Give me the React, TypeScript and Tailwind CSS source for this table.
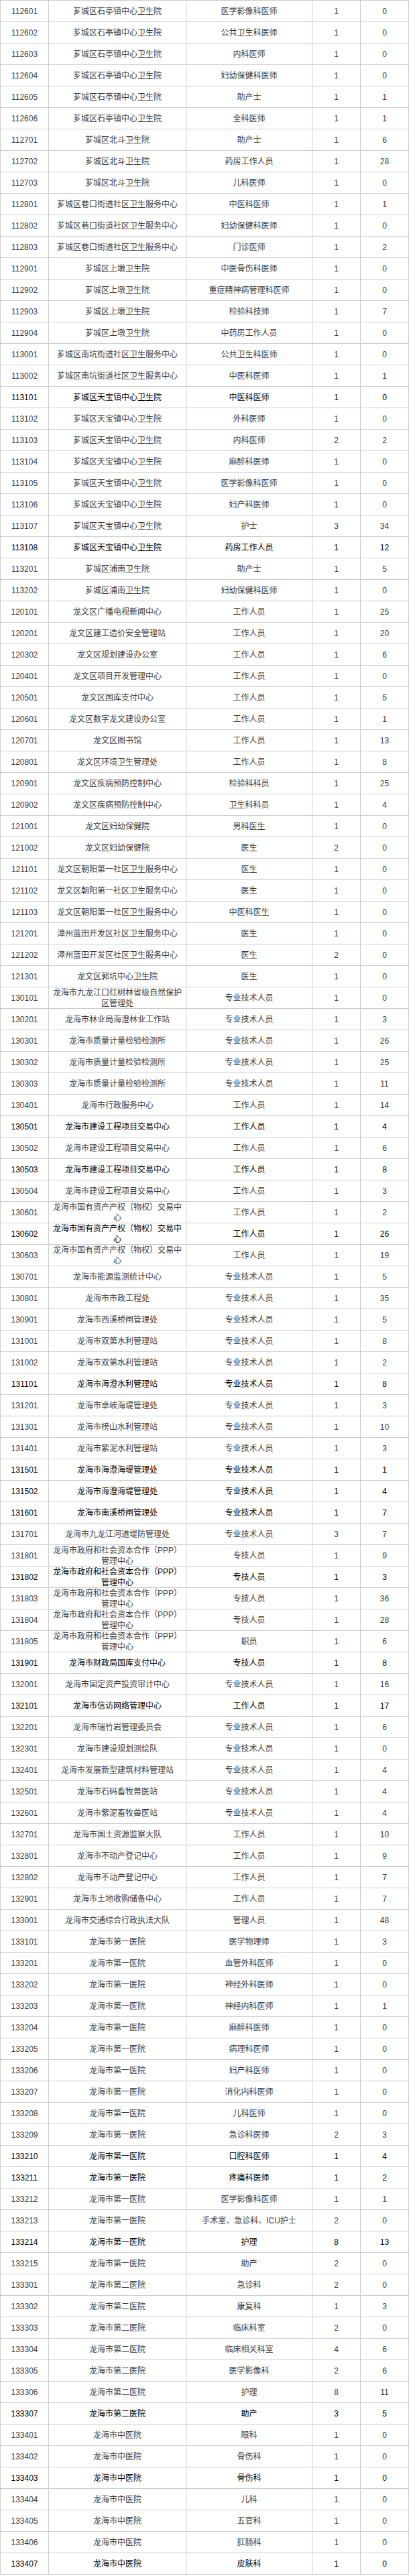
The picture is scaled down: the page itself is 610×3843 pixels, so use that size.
const RAW = `
112601|芗城区石亭镇中心卫生院|医学影像科医师|1|0
112602|芗城区石亭镇中心卫生院|公共卫生科医师|1|0
112603|芗城区石亭镇中心卫生院|内科医师|1|0
112604|芗城区石亭镇中心卫生院|妇幼保健科医师|1|0
112605|芗城区石亭镇中心卫生院|助产士|1|1
112606|芗城区石亭镇中心卫生院|全科医师|1|1
112701|芗城区北斗卫生院|助产士|1|6
112702|芗城区北斗卫生院|药房工作人员|1|28
112703|芗城区北斗卫生院|儿科医师|1|0
112801|芗城区巷口街道社区卫生服务中心|中医科医师|1|1
112802|芗城区巷口街道社区卫生服务中心|妇幼保健科医师|1|0
112803|芗城区巷口街道社区卫生服务中心|门诊医师|1|2
112901|芗城区上墩卫生院|中医骨伤科医师|1|0
112902|芗城区上墩卫生院|重症精神病管理科医师|1|0
112903|芗城区上墩卫生院|检验科技师|1|7
112904|芗城区上墩卫生院|中药房工作人员|1|0
113001|芗城区南坑街道社区卫生服务中心|公共卫生科医师|1|0
113002|芗城区南坑街道社区卫生服务中心|中医科医师|1|1
113101|芗城区天宝镇中心卫生院|中医科医师|1|0|d
113102|芗城区天宝镇中心卫生院|外科医师|1|0
113103|芗城区天宝镇中心卫生院|内科医师|2|2
113104|芗城区天宝镇中心卫生院|麻醉科医师|1|0
113105|芗城区天宝镇中心卫生院|医学影像科医师|1|0
113106|芗城区天宝镇中心卫生院|妇产科医师|1|0
113107|芗城区天宝镇中心卫生院|护士|3|34
113108|芗城区天宝镇中心卫生院|药房工作人员|1|12|d
113201|芗城区浦南卫生院|助产士|1|5
113202|芗城区浦南卫生院|妇幼保健科医师|1|0
120101|龙文区广播电视新闻中心|工作人员|1|25
120201|龙文区建工造价安全管理站|工作人员|1|20
120302|龙文区规划建设办公室|工作人员|1|6
120401|龙文区项目开发管理中心|工作人员|1|0
120501|龙文区国库支付中心|工作人员|1|5
120601|龙文区数字龙文建设办公室|工作人员|1|1
120701|龙文区图书馆|工作人员|1|13
120801|龙文区环境卫生管理处|工作人员|1|8
120901|龙文区疾病预防控制中心|检验科科员|1|25
120902|龙文区疾病预防控制中心|卫生科科员|1|4
121001|龙文区妇幼保健院|男科医生|1|0
121002|龙文区妇幼保健院|医生|2|0
121101|龙文区朝阳第一社区卫生服务中心|医生|1|0
121102|龙文区朝阳第一社区卫生服务中心|医生|1|0
121103|龙文区朝阳第一社区卫生服务中心|中医科医生|1|0
121201|漳州蓝田开发区社区卫生服务中心|医生|1|0
121202|漳州蓝田开发区社区卫生服务中心|医生|2|0
121301|龙文区郭坑中心卫生院|医生|1|0
130101|龙海市九龙江口红树林省级自然保护区管理处|专业技术人员|1|0
130201|龙海市林业局海澄林业工作站|专业技术人员|1|3
130301|龙海市质量计量检验检测所|专业技术人员|1|26
130302|龙海市质量计量检验检测所|专业技术人员|1|25
130303|龙海市质量计量检验检测所|专业技术人员|1|11
130401|龙海市行政服务中心|工作人员|1|14
130501|龙海市建设工程项目交易中心|工作人员|1|4|d
130502|龙海市建设工程项目交易中心|工作人员|1|6
130503|龙海市建设工程项目交易中心|工作人员|1|8|d
130504|龙海市建设工程项目交易中心|工作人员|1|3
130601|龙海市国有资产产权（物权）交易中心|工作人员|1|2
130602|龙海市国有资产产权（物权）交易中心|工作人员|1|26|d
130603|龙海市国有资产产权（物权）交易中心|工作人员|1|19
130701|龙海市能源监测统计中心|专业技术人员|1|5
130801|龙海市市政工程处|专业技术人员|1|35
130901|龙海市西溪桥闸管理处|专业技术人员|1|5
131001|龙海市双第水利管理站|专业技术人员|1|8
131002|龙海市双第水利管理站|专业技术人员|1|2
131101|龙海市海澄水利管理站|专业技术人员|1|8|d
131201|龙海市卓岐海堤管理处|专业技术人员|1|3
131301|龙海市榜山水利管理站|专业技术人员|1|10
131401|龙海市紫泥水利管理站|专业技术人员|1|3
131501|龙海市海澄海堤管理处|专业技术人员|1|1|d
131502|龙海市海澄海堤管理处|专业技术人员|1|4|d
131601|龙海市南溪桥闸管理处|专业技术人员|1|7|d
131701|龙海市九龙江河道堤防管理处|专业技术人员|3|7
131801|龙海市政府和社会资本合作（PPP）管理中心|专技人员|1|9
131802|龙海市政府和社会资本合作（PPP）管理中心|专技人员|1|3|d
131803|龙海市政府和社会资本合作（PPP）管理中心|专技人员|1|36
131804|龙海市政府和社会资本合作（PPP）管理中心|专技人员|1|28
131805|龙海市政府和社会资本合作（PPP）管理中心|职员|1|6
131901|龙海市财政局国库支付中心|专技人员|1|8|d
132001|龙海市固定资产投资审计中心|专业技术人员|1|16
132101|龙海市信访网络管理中心|工作人员|1|17|d
132201|龙海市瑞竹岩管理委员会|专业技术人员|1|6
132301|龙海市建设规划测绘队|专业技术人员|1|0
132401|龙海市发展新型建筑材料管理站|专业技术人员|1|4
132501|龙海市石码畜牧兽医站|专业技术人员|1|4
132601|龙海市紫泥畜牧兽医站|专业技术人员|1|4
132701|龙海市国土资源监察大队|工作人员|1|10
132801|龙海市不动产登记中心|工作人员|1|9
132802|龙海市不动产登记中心|工作人员|1|7
132901|龙海市土地收购储备中心|工作人员|1|7
133001|龙海市交通综合行政执法大队|管理人员|1|48
133101|龙海市第一医院|医学物理师|1|3
133201|龙海市第一医院|血管外科医师|1|0
133202|龙海市第一医院|神经外科医师|1|0
133203|龙海市第一医院|神经内科医师|1|1
133204|龙海市第一医院|麻醉科医师|1|0
133205|龙海市第一医院|病理科医师|1|0
133206|龙海市第一医院|妇产科医师|1|0
133207|龙海市第一医院|消化内科医师|1|0
133208|龙海市第一医院|儿科医师|1|0
133209|龙海市第一医院|急诊科医师|2|3
133210|龙海市第一医院|口腔科医师|1|4|d
133211|龙海市第一医院|疼痛科医师|1|2|d
133212|龙海市第一医院|医学影像科医师|1|1
133213|龙海市第一医院|手术室、急诊科、ICU护士|2|0
133214|龙海市第一医院|护理|8|13|d
133215|龙海市第一医院|助产|2|0
133301|龙海市第二医院|急诊科|2|0
133302|龙海市第二医院|康复科|1|3
133303|龙海市第二医院|临床科室|2|0
133304|龙海市第二医院|临床相关科室|4|6
133305|龙海市第二医院|医学影像科|2|6
133306|龙海市第二医院|护理|8|11
133307|龙海市第二医院|助产|3|5|d
133401|龙海市中医院|眼科|1|0
133402|龙海市中医院|骨伤科|1|0
133403|龙海市中医院|骨伤科|1|0|d
133404|龙海市中医院|儿科|1|0
133405|龙海市中医院|五官科|1|0
133406|龙海市中医院|肛肠科|1|0
133407|龙海市中医院|皮肤科|1|0|d
`

type Row = { id: string; unit: string; post: string; plan: string; count: string; dark: boolean }

const rows: Row[] = RAW.trim()
  .split('\n')
  .map((line) => {
    const [id, unit, post, plan, count, flag] = line.split('|')
    return { id, unit, post, plan, count, dark: flag === 'd' }
  })

const cell = 'flex items-center justify-center text-center border-r border-[#cccccc] px-1 leading-4'

export default function App() {
  return (
    <div className="w-[610px] bg-white border-l border-t border-[#cccccc] text-[12px] font-[family-name:Liberation_Sans,Noto_Sans_CJK_SC,sans-serif]">
      {rows.map((r) => (
        <div
          key={r.id}
          className={`grid grid-cols-[72px_205px_188px_72px_72px] h-[32px] border-b border-[#cccccc] ${
            r.dark ? 'text-black' : 'text-[#3c3c3c]'
          }`}
        >
          <div className={cell}>{r.id}</div>
          <div className={cell}>{r.unit}</div>
          <div className={cell}>{r.post}</div>
          <div className={cell}>{r.plan}</div>
          <div className={cell}>{r.count}</div>
        </div>
      ))}
    </div>
  )
}
